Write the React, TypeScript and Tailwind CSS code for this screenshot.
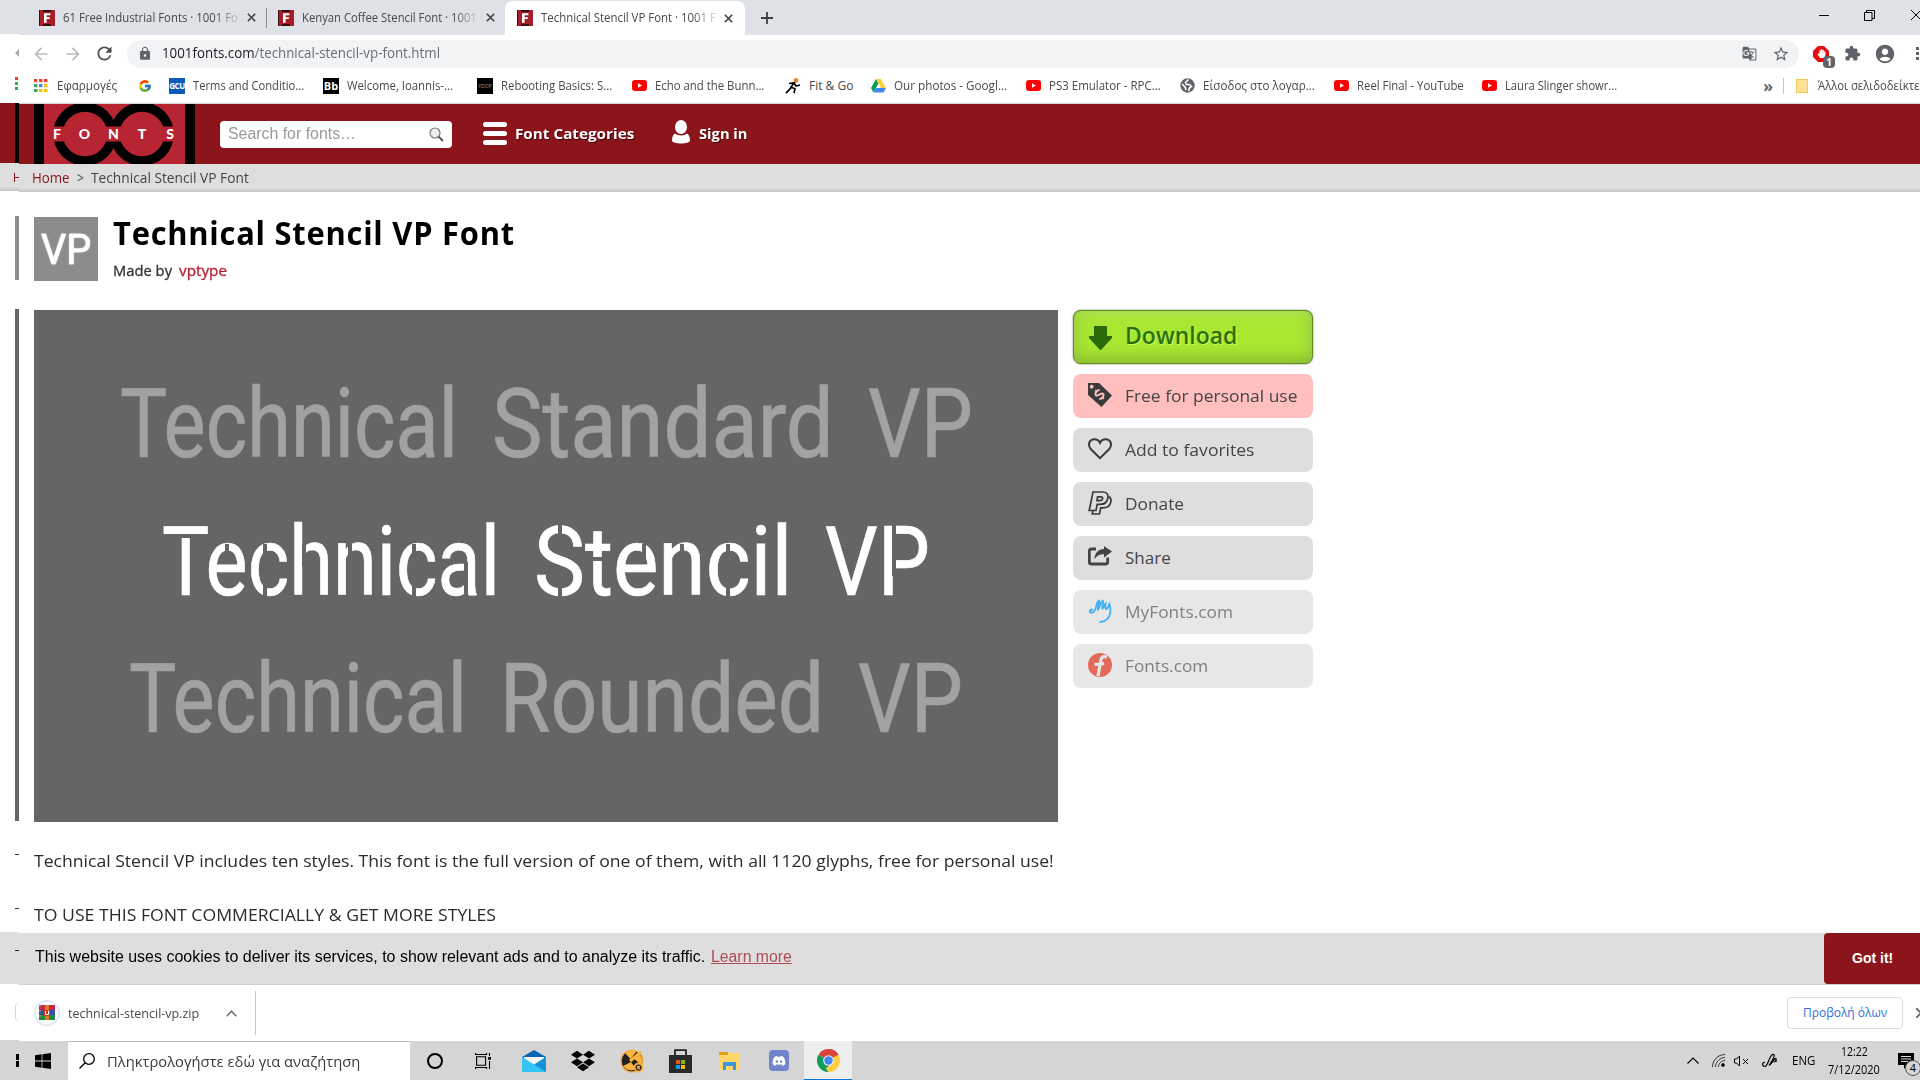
import React, { useLayoutEffect, useRef, useState } from "react";
import type { ReactNode } from "react";
import { FcGoogle } from "react-icons/fc";
import { FaDiscord, FaDropbox, FaHandPaper } from "react-icons/fa";
import { MdLock, MdStarBorder, MdExtension, MdAccountCircle, MdGTranslate, MdRefresh, MdArrowBack, MdArrowForward } from "react-icons/md";

/** Single line of text stretched horizontally to a given width. */
function Fit({ w, className = "", children }: { w: number; className?: string; children: ReactNode }) {
  const ref = useRef<HTMLSpanElement>(null);
  const [s, setS] = useState(1);
  useLayoutEffect(() => {
    if (ref.current) setS(w / ref.current.offsetWidth);
  }, [w]);
  return (
    <span className="block shrink-0" style={{ width: w }}>
      <span ref={ref} className={"inline-block origin-left whitespace-nowrap align-top " + className} style={{ transform: `scaleX(${s})` }}>
        {children}
      </span>
    </span>
  );
}

function FontsFavicon() {
  return (
    <svg className="h-4 w-4 shrink-0" viewBox="0 0 16 16">
      <rect width="16" height="16" fill="#a61f2b" />
      <path d="M4 0h8v2H4zM4 14h8v2H4zM0 0h1v16H0z" fill="#3a0d10" />
      <path d="M5 3.2h6.4v2H7.6v2h3.2v1.9H7.6v3.7H5z" fill="#fff" />
    </svg>
  );
}

function Cross({ className = "" }: { className?: string }) {
  return (
    <svg className={"h-[9px] w-[9px] shrink-0 " + className} viewBox="0 0 9 9">
      <path d="M.8.8l7.4 7.4M8.2.8L.8 8.2" stroke="#3c4043" strokeWidth="1.6" />
    </svg>
  );
}

function TabTitle({ children }: { children: string }) {
  return (
    <div className="ml-2 w-[176px] [mask-image:linear-gradient(to_right,black_86%,transparent_102%)]">
      <Fit w={175}>{children}</Fit>
    </div>
  );
}

function Tabs() {
  return (
    <div className="flex h-[35px] items-center bg-[#dee1e6] text-[12px] text-[#45484c]">
      <div className="flex w-[247px] items-center pl-5">
        <FontsFavicon />
        <TabTitle>61 Free Industrial Fonts · 1001 Fo</TabTitle>
        <Cross className="ml-2" />
      </div>
      <div className="h-5 w-px bg-[#8a8d91]" />
      <div className="flex w-[238px] items-center pl-[11px]">
        <FontsFavicon />
        <TabTitle>Kenyan Coffee Stencil Font · 1001</TabTitle>
        <Cross className="ml-2" />
      </div>
      <div className="mt-px flex h-[34px] w-[240px] items-center rounded-t-lg bg-white pl-3">
        <FontsFavicon />
        <TabTitle>Technical Stencil VP Font · 1001 F</TabTitle>
        <Cross className="ml-[7px]" />
      </div>
      <svg className="ml-4 h-3 w-3" viewBox="0 0 12 12"><path d="M6 0v12M0 6h12" stroke="#3c4043" strokeWidth="1.8" /></svg>
      <div className="mb-[5px] ml-auto flex items-center">
        <div className="mr-[-1px] h-px w-[10px] bg-black" />
        <svg className="ml-9 h-[11px] w-[11px]" viewBox="0 0 11 11"><path d="M.5 2.5h7.5v8H.5zM2.5 2.5v-2h8v8H8" fill="none" stroke="#000" /></svg>
        <svg className="ml-9 h-[10px] w-[9px]" viewBox="0 0 9 10"><path d="M0 0l10 10M10 0L0 10" stroke="#000" /></svg>
      </div>
    </div>
  );
}

function Toolbar() {
  return (
    <div className="flex h-9 items-center pt-[2px] text-[#5f6368]">
      <MdArrowBack className="ml-3 h-5 w-5 text-[#babcbe]" />
      <MdArrowForward className="ml-3 h-5 w-5 text-[#babcbe]" />
      <MdRefresh className="ml-[11px] h-[21px] w-[21px] text-[#4a4d51]" />
      <div className="ml-3 flex h-7 w-[1672px] items-center rounded-full bg-[#f1f3f4]">
        <MdLock className="ml-[10px] h-[15px] w-4" />
        <div className="ml-[9px]"><Fit w={278} className="text-[14px]"><span className="text-[#202124]">1001fonts.com</span><span className="text-[#6a6e73]">/technical-stencil-vp-font.html</span></Fit></div>
        <MdGTranslate className="ml-auto h-[15px] w-[15px]" />
        <MdStarBorder className="ml-[15px] mr-[9px] h-[18px] w-[18px]" />
      </div>
      <div className="relative ml-[14px] h-4 w-4">
        <svg className="h-4 w-4" viewBox="0 0 16 16"><path d="M5 0h6l5 5v6l-5 5H5l-5-5V5z" fill="#e40d12" /></svg>
        <FaHandPaper className="absolute left-1 top-[3px] h-[9px] w-[9px] text-white" />
        <span className="absolute left-[10px] top-[10px] h-3 w-3 rounded-sm bg-[#606367] text-center text-[10px] font-bold leading-3 text-white">1</span>
      </div>
      <MdExtension className="ml-[15px] h-[17px] w-[17px]" />
      <MdAccountCircle className="ml-[13px] h-[22px] w-[22px]" />
      <div className="ml-5 flex flex-col gap-[2px]">
        <i className="block h-[3px] w-[3px] bg-[#5f6368]" /><i className="block h-[3px] w-[3px] bg-[#5f6368]" /><i className="block h-[3px] w-[3px] bg-[#5f6368]" />
      </div>
    </div>
  );
}

function YouTube() {
  return <svg className="h-[11px] w-[15px]" viewBox="0 0 15 11"><rect width="15" height="11" rx="3" fill="#f00" /><path d="M6 3.2v4.6l4-2.3z" fill="#fff" /></svg>;
}

function Apps() {
  return (
    <svg className="h-[13px] w-[14px]" viewBox="0 0 14 13">
      {["#ea4335", "#ea4335", "#ea4335", "#34a853", "#4285f4", "#fbbc05", "#34a853", "#fbbc05", "#fbbc05"].map((c, i) => (
        <rect key={i} x={(i % 3) * 5} y={Math.floor(i / 3) * 5} width="3.4" height="3.2" fill={c} />
      ))}
    </svg>
  );
}

const marks: { icon: ReactNode; w: number; label: string; next: number }[] = [
  { icon: <Apps />, w: 60, label: "Εφαρμογές", next: 20 },
  { icon: <FcGoogle className="h-[14px] w-[14px]" />, w: 0, label: "", next: 16 },
  { icon: <span className="flex h-4 w-4 items-center justify-center bg-[#0b5cb8] text-[8px] font-bold tracking-tighter text-white">GCU</span>, w: 111, label: "Terms and Conditio...", next: 19 },
  { icon: <span className="flex h-4 w-4 items-center justify-center bg-black text-[11px] font-bold text-white">Bb</span>, w: 106, label: "Welcome, Ioannis-...", next: 24 },
  { icon: <span className="flex h-4 w-4 items-center justify-center bg-black text-[5px] text-neutral-400">YDOP</span>, w: 111, label: "Rebooting Basics: S...", next: 19 },
  { icon: <YouTube />, w: 109, label: "Echo and the Bunn...", next: 21 },
  {
    icon: <svg className="h-4 w-4" viewBox="0 0 16 16"><circle cx="11" cy="2.4" r="2.3" fill="#f58220" /><path d="M4 5.5l5-.6-3 4.3 4 1.6-1 4.5M6.3 9.5L1 15.2M9 5l2 3 4-1" stroke="#000" strokeWidth="1.7" fill="none" /></svg>,
    w: 44, label: "Fit & Go", next: 17,
  },
  {
    icon: <svg className="h-[14px] w-[15px]" viewBox="0 0 15 14"><path d="M5 0L0 9l2.5 4.5L7.5 4.500z" fill="#0f9d58" /><path d="M5 0h5l5 9h-5z" fill="#ffcd40" /><path d="M2.5 13.5L5 9h10l-2.5 4.5z" fill="#4285f4" /></svg>,
    w: 113, label: "Our photos - Googl...", next: 18,
  },
  { icon: <YouTube />, w: 112, label: "PS3 Emulator - RPC...", next: 18 },
  {
    icon: <svg className="h-[15px] w-[15px]" viewBox="0 0 15 15"><circle cx="7.5" cy="7.5" r="7.2" fill="#5f6368" /><path d="M8.5 1.5L5.5 4.5l1 2h3l2 2-2 1.500-1 3M2 6l3 3 1 3" stroke="#fff" strokeWidth="1.6" fill="none" /></svg>,
    w: 112, label: "Είσοδος στο λογαρ...", next: 18,
  },
  { icon: <YouTube />, w: 107, label: "Reel Final - YouTube", next: 17 },
  { icon: <YouTube />, w: 112, label: "Laura Slinger showr...", next: 0 },
];

function Bookmarks() {
  return (
    <div className="flex h-8 items-center border-b border-[#d3d3d3] pb-[3px] pl-[14px] text-[12px] leading-4 text-[#45484c]">
      {marks.map((m, i) => (
        <React.Fragment key={i}>
          <div className="flex w-4 shrink-0 justify-center">{m.icon}</div>
          {m.label && <div className="ml-2"><Fit w={m.w}>{m.label}</Fit></div>}
          <div className="shrink-0" style={{ width: m.next }} />
        </React.Fragment>
      ))}
      <span className="ml-auto text-[16px] font-bold leading-4 text-[#5f6368]">»</span>
      <div className="ml-[10px] h-4 w-px bg-[#c4c6c9]" />
      <div className="ml-3 h-[14px] w-3 border border-[#f0cb58] bg-[#fde293]" />
      <div className="ml-[10px]"><Fit w={102}>Άλλοι σελιδοδείκτε</Fit></div>
    </div>
  );
}

function Header() {
  return (
    <div className="flex h-[60px] items-center bg-[#8c151c] font-bold text-white">
      <svg className="ml-[15px] h-[60px] w-[161px]" viewBox="0 0 161 60">
        <rect width="161" height="60" fill="#000" />
        <rect x="10" width="141" height="60" fill="#b72533" />
        <g fill="none" stroke="#000" strokeWidth="9.500"><circle cx="51" cy="30" r="27" /><circle cx="108" cy="30" r="27" /></g>
        <rect x="10" y="22.500" width="141" height="15" fill="#b72533" />
        <g fill="#fff" fontFamily="Lato" fontWeight="900" fontSize="14" textAnchor="middle">
          <text x="23" y="35">F</text><text x="50.500" y="35">O</text><text x="79.500" y="35">N</text><text x="108" y="35">T</text><text x="136" y="35">S</text>
        </g>
      </svg>
      <div className="ml-[25px] mt-px flex h-[27px] w-[232px] items-center rounded bg-white pl-2 pr-2 font-['Liberation_Sans'] text-[16px] font-normal text-[#999]">
        <Fit w={128}>Search for fonts…</Fit>
        <svg className="ml-auto h-[15px] w-[15px]" viewBox="0 0 15 15"><circle cx="6" cy="6" r="5" fill="#eee" stroke="#777" strokeWidth="1.2" /><path d="M9.500 9.500L14 14" stroke="#555" strokeWidth="1.900" /></svg>
      </div>
      <div className="ml-[31px] flex w-6 flex-col gap-[4px]">
        <i className="h-[5px] rounded-full bg-white" /><i className="h-[5px] rounded-full bg-white" /><i className="h-[5px] rounded-full bg-white" />
      </div>
      <div className="ml-2"><Fit w={119} className="text-[15px] [text-shadow:1px_1px_1px_#400]">Font Categories</Fit></div>
      <svg className="-mt-[3px] ml-[38px] h-6 w-[18px]" viewBox="0 0 18 24"><path d="M3 13.500c3 2.500 9 2.500 12 0 2 1 3 4 3 7 0 4-18 4-18 0 0-3 1-6 3-7z" fill="#fff" /><ellipse cx="9" cy="7" rx="6" ry="7" fill="#fff" /></svg>
      <div className="ml-[9px]"><Fit w={49} className="text-[15px] [text-shadow:1px_1px_1px_#400]">Sign in</Fit></div>
    </div>
  );
}

function PaypalOutline() {
  return (
    <svg viewBox="0 0 24 24" fill="none" stroke="#3a3a3a" strokeWidth="1.700">
      <path d="M5 1h9.500c4 0 6 2 5.400 6-.7 4.500-3.700 6.400-8 6.400H9.200L8 19.500H1.200z" />
      <path d="M9.600 5.800h3.200c1.500 0 2 .8 1.800 1.800-.3 1.500-1.300 2-2.800 2H9z" />
      <path d="M21 5.500c2 1.500 2.400 4 1.500 6.500-1 3.500-4 4.800-7.500 4.800h-2.300L11.500 23H4.300l.6-3" />
    </svg>
  );
}

const inactive = "#e7e7e7";
const actions: { label: string; w: number; bg: string; color: string; icon: ReactNode }[] = [
  {
    label: "Free for personal use", w: 172, bg: "#ffbfbf", color: "#444",
    icon: <svg viewBox="0 0 24 24"><path d="M0 0h11l13 12.500L13.500 24 0 12z" fill="#3a3a3a" /><circle cx="3.700" cy="3.700" r="1.900" fill="#ffbfbf" /><g transform="translate(11.500 11.500) rotate(-45)"><path d="M3.300-3C2-4.600-3-4.600-3-2s6 1.500 6 4-5 2.700-6.300 1M0-6v1.800M0 4.200V6.200" stroke="#ffbfbf" strokeWidth="1.900" fill="none" /></g></svg>,
  },
  {
    label: "Add to favorites", w: 130, bg: "#dedede", color: "#444",
    icon: <svg viewBox="0 0 24 24"><path d="M12 21.200L2.700 12C-1 7 2 2.200 6.200 2.200c3 0 5 1.800 5.800 3.600.8-1.800 2.800-3.600 5.800-3.600C22 2.200 25 7 21.300 12z" fill="none" stroke="#3a3a3a" strokeWidth="2" /></svg>,
  },
  { label: "Donate", w: 59, bg: "#dedede", color: "#444", icon: <PaypalOutline /> },
  {
    label: "Share", w: 46, bg: "#dedede", color: "#444",
    icon: <svg viewBox="0 0 24 24"><path d="M8 4H3.500Q1.300 4 1.300 6.200v10.600Q1.300 19 3.500 19h14Q19.700 19 19.700 17v-4.500" fill="none" stroke="#444" strokeWidth="2.800" /><path d="M16 1l8 5.500-8 6V9.200c-4 0-7 1-9.500 5C6.500 8 10.500 4 16 4z" fill="#444" /></svg>,
  },
  {
    label: "MyFonts.com", w: 108, bg: inactive, color: "#808080",
    icon: <svg viewBox="0 0 24 24"><path d="M3.500 10.500C0 11 0 14 4 13.500 8 13 7.500 3 10.500 1.500c1.500 1-1.500 7-1 9 1.500-2 3-8 5-9 1.500.5-1 6-.5 8 1.500 0 2-4 3.500-5-.5 3-1 5 .5 5.500 2 0 2.500-3 3.500-5 1.500 4 3 17-9.500 18" transform="translate(.8 0) scale(.96 1)" fill="none" stroke="#3db0f7" strokeWidth="1.900" strokeLinecap="round" /></svg>,
  },
  {
    label: "Fonts.com", w: 83, bg: inactive, color: "#808080",
    icon: <svg viewBox="0 0 24 24"><circle cx="12" cy="12" r="12" fill="#e36b5b" /><path d="M19 4c-5-1.500-6 1-6.500 5L10 23M6.500 11.500l9.500-.8" fill="none" stroke={inactive} strokeWidth="3.200" /></svg>,
  },
];

/** Bridges that break up the stencil letters, in panel coordinates. */
const bridges = [
  { x: 128, y: 224.5, w: 52, h: 4 },
  { x: 190.500, y: 234, w: 4, h: 14 },
  { x: 229, y: 234, w: 4, h: 56 },
  { x: 268, y: 234, w: 4, h: 22 },
  { x: 314, y: 234, w: 4, h: 24 },
  { x: 378, y: 234, w: 4, h: 56 },
  { x: 430, y: 252, w: 4, h: 36 },
  { x: 524, y: 212, w: 4, h: 16 },
  { x: 524, y: 272, w: 4, h: 18 },
  { x: 552, y: 247, w: 28, h: 4 },
  { x: 608, y: 234, w: 4, h: 14 },
  { x: 646, y: 234, w: 4, h: 24 },
  { x: 692, y: 234, w: 4, h: 56 },
  { x: 858, y: 212, w: 4, h: 54 },
];

function Specimen() {
  return (
    <div className="relative flex h-[512px] w-[1024px] shrink-0 flex-col bg-[#666465] pt-[66px] font-['Roboto'] text-[97px] leading-[97px] text-[#a2a2a2] [-webkit-text-stroke:0.7px_currentColor]">
      <div className="flex pl-[86px]">
        <Fit w={338}>Technical</Fit><div className="w-[34px]" /><Fit w={342}>Standard</Fit><div className="w-[34px]" /><Fit w={105}>VP</Fit>
      </div>
      <div className="mt-[41px] flex pl-[128px] text-white">
        <Fit w={338}>Technical</Fit><div className="w-[34px]" /><Fit w={258}>Stencil</Fit><div className="w-[33px]" /><Fit w={105}>VP</Fit>
      </div>
      <div className="mt-[40px] flex pl-[95px]">
        <Fit w={338}>Technical</Fit><div className="w-[33px]" /><Fit w={324}>Rounded</Fit><div className="w-[34px]" /><Fit w={105}>VP</Fit>
      </div>
      {bridges.map((b, i) => (
        <i key={i} className="absolute bg-[#666465]" style={{ left: b.x, top: b.y, width: b.w, height: b.h }} />
      ))}
    </div>
  );
}

function Page() {
  return (
    <div className="h-[742px] overflow-hidden text-[#333]">
      <div className="flex pl-[15px] pt-[25px]">
        <div className="flex h-16 w-16 items-center justify-center bg-[#8b8c8c] pt-[2px]">
          <Fit w={50} className="font-['Roboto'] text-[42px] leading-[64px] text-white [-webkit-text-stroke:0.600px_white] [text-shadow:0_0_2px_white]">VP</Fit>
        </div>
        <div className="-mt-px ml-[15px] h-[65px]">
          <Fit w={402} className="text-[33px] font-bold leading-[34px] tracking-wide text-black">Technical Stencil VP Font</Fit>
          <div className="mt-[10px] flex text-[14px] leading-[22px] [-webkit-text-stroke:0.300px_currentColor]">
            <Fit w={59}>Made by</Fit>
            <div className="w-[7px]" />
            <Fit w={48} className="text-[#b71f30]">vptype</Fit>
          </div>
        </div>
      </div>
      <div className="mt-[29px] flex pl-[15px]">
        <Specimen />
        <div className="ml-[15px] flex w-[240px] flex-col gap-[10px]">
          <div className="flex h-[54px] items-center rounded-lg border border-[#5c8f16] bg-[#a8e732] pl-[15px] [box-shadow:inset_0_2px_12px_rgba(255,255,255,.25),inset_0_-4px_14px_rgba(70,110,10,.45),0_0_2px_#777]">
            <svg className="mt-[2px] h-6 w-[23px]" viewBox="0 0 23 24"><path d="M5 0h13v10h5v2L12 24h-1L0 12v-2h5z" fill="#2b6a09" /></svg>
            <div className="-mt-1 ml-[13px]"><Fit w={112} className="text-[23px] font-semibold text-[#2f6f0b] [text-shadow:1px_1px_0_#c8ff60]">Download</Fit></div>
          </div>
          {actions.map((a) => (
            <div key={a.label} className="flex h-11 items-center rounded-lg pl-[15px]" style={{ background: a.bg, color: a.color }}>
              <div className="mb-[1px] h-6 w-6 [&>svg]:h-6 [&>svg]:w-6">{a.icon}</div>
              <div className="ml-[13px]"><Fit w={a.w} className="text-[17px]">{a.label}</Fit></div>
            </div>
          ))}
        </div>
      </div>
      <div className="pl-[15px] text-[17px] leading-[54px] text-[#2b2b2b]">
        <div className="mt-[12px]"><Fit w={1020}>Technical Stencil VP includes ten styles. This font is the full version of one of them, with all 1120 glyphs, free for personal use!</Fit></div>
        <div><Fit w={462}>TO USE THIS FONT COMMERCIALLY &amp; GET MORE STYLES</Fit></div>
      </div>
    </div>
  );
}

function CookieBar() {
  return (
    <div className="flex h-[52px] items-center border-b border-[#d0d0d4] bg-[#dedede] pl-4 font-['Liberation_Sans'] text-[16px] text-black">
      <div className="-mt-[3px] flex">
        <Fit w={670}>This website uses cookies to deliver its services, to show relevant ads and to analyze its traffic.</Fit>
        <div className="w-[6px]" />
        <Fit w={81} className="text-[#ad4c55] underline">Learn more</Fit>
      </div>
      <div className="ml-auto flex h-[51px] w-24 items-center rounded-l bg-[#8c151c] pl-7 text-[14px] font-bold text-white"><Fit w={41}>Got it!</Fit></div>
    </div>
  );
}

function Downloads() {
  return (
    <div className="flex h-[56px] items-center bg-white pl-[15px] text-[12px]">
      <svg className="h-[26px] w-[26px]" viewBox="0 0 26 26">
        <circle cx="13" cy="13" r="12.300" fill="#f8fafe" stroke="#d9e4f8" strokeWidth="1.500" />
        <path d="M5 5h16v5H5z" fill="#c2284e" /><path d="M5 10h16v5H5z" fill="#344fa8" /><path d="M5 15h16v5H5z" fill="#1c8a3b" />
        <path d="M11 5h4v15h-4z" fill="#e07a1c" /><path d="M10 10h6v6h-6z" fill="#d93416" /><path d="M11.500 11v3.500h3V11" stroke="#fff" fill="none" />
        <path d="M6 5v15" stroke="#e8c04a" strokeDasharray="2 3" />
      </svg>
      <div className="ml-2 mt-px"><Fit w={131} className="text-[#45484c]">technical-stencil-vp.zip</Fit></div>
      <svg className="ml-[27px] h-[7px] w-[11px]" viewBox="0 0 11 7"><path d="M.7 6.200l4.800-5 4.800 5" fill="none" stroke="#707376" strokeWidth="1.600" /></svg>
      <div className="ml-[18px] h-11 w-px bg-[#c4c6c8]" />
      <div className="ml-auto flex h-8 w-[116px] items-center justify-center rounded border border-[#dadce0] text-[#2f6fe0]"><Fit w={84}>Προβολή όλων</Fit></div>
      <svg className="ml-[13px] h-[10px] w-1" viewBox="0 0 4 10"><path d="M0 0l5 5-5 5" fill="none" stroke="#5f6368" strokeWidth="1.800" /></svg>
    </div>
  );
}

function Taskbar() {
  return (
    <div className="flex h-[39px] items-center bg-[#d5d5d5] text-[12px] text-black">
      <svg className="ml-4 h-4 w-4" viewBox="0 0 16 16"><path d="M0 2.200L6.600 1.300v6.300H0zM7.400 1.200L16 0v7.600H7.400zM0 8.400h6.600v6.300L0 13.800zM7.400 8.400H16V16l-8.600-1.200z" /></svg>
      <div className="ml-[17px] flex h-[39px] w-[342px] items-center border-t border-[#bdbdbd] bg-white pl-[11px]">
        <svg className="h-4 w-4" viewBox="0 0 16 16"><circle cx="10" cy="6" r="5.300" fill="none" stroke="#000" strokeWidth="1.300" /><path d="M6.200 9.800L.5 15.500" stroke="#000" strokeWidth="1.300" /></svg>
        <div className="ml-3"><Fit w={253} className="text-[15px] text-[#3c3c3c]">Πληκτρολογήστε εδώ για αναζήτηση</Fit></div>
      </div>
      <div className="ml-[17px] h-4 w-4 rounded-full border-2 border-black" />
      <svg className="ml-8 h-4 w-4" viewBox="0 0 16 16" fill="none" stroke="#000" strokeWidth="1.100"><path d="M1.600 3.700h9v8.600h-9zM.6 0v1.500h11V0M.6 16v-1.500h11V16M14.500 0v3M14.500 8v8" /><path d="M13.200 4h2.800v2.800h-2.800z" fill="#000" stroke="none" /></svg>
      <svg className="ml-[31px] h-[22px] w-6" viewBox="0 0 24 22"><path d="M0 7l12-7 12 7v4H0z" fill="#0a64b4" /><path d="M2 7h20v8H2z" fill="#f4f4f4" /><path d="M0 7l12 8.500L24 7v15H0z" fill="#29b6f0" /><path d="M0 22L24 7v15z" fill="#1590dc" /><path d="M0 7l24 15H0z" fill="#35c5f4" /></svg>
      <FaDropbox className="ml-[25px] h-6 w-6" />
      <svg className="ml-[25px] h-6 w-6" viewBox="0 0 24 24"><circle cx="12" cy="12" r="11.500" fill="#f2a93b" /><circle cx="12" cy="12" r="10.300" fill="#222" /><path d="M10.500 10L5 4a10 10 0 0112-2zM13 9l7-3a10 10 0 011.500 10zM11 13l5 7a10 10 0 01-13-3z" fill="#f7b53f" /><path d="M10 12L21 3" stroke="#f7b53f" strokeWidth="3" /><circle cx="18.500" cy="18.500" r="4" fill="#222" stroke="#f7b53f" strokeWidth="1.800" /><path d="M17 17l3 3M20 17l-3 3" stroke="#f7b53f" strokeWidth="1.200" /></svg>
      <svg className="ml-[25px] h-6 w-[23px]" viewBox="0 0 23 24"><path d="M6 7V1.200h11V7" fill="none" stroke="#222" strokeWidth="1.800" /><path d="M0 6h23v18H0z" fill="#2a2a2a" /><path d="M7 11h4v4H7z" fill="#f25022" /><path d="M12 11h4v4h-4z" fill="#7fba00" /><path d="M7 16h4v4H7z" fill="#00a4ef" /><path d="M12 16h4v4h-4z" fill="#ffb900" /></svg>
      <svg className="ml-[27px] h-[18px] w-[21px]" viewBox="0 0 21 18"><path d="M0 0h9v4H0z" fill="#e09c10" /><path d="M0 3h8l2-2h11v17H0z" fill="#ffd667" /><path d="M4 18v-8h13v8h-3v-4H7v4z" fill="#3a96dd" /></svg>
      <div className="ml-[29px] flex h-[21px] w-5 items-center justify-center rounded-sm bg-[#7184cb]"><FaDiscord className="h-[14px] w-[14px] text-white" /></div>
      <div className="ml-[15px] flex h-[39px] w-12 items-center justify-center border-b border-[#0078d7] bg-[#eee]">
        <svg className="h-[23px] w-[23px]" viewBox="0 0 24 24"><path d="M12 12L1.600 6A12 12 0 0122.400 6z" fill="#db4437" /><path d="M12 12L22.400 6A12 12 0 0112 24z" fill="#ffcd40" /><path d="M12 12v12A12 12 0 011.600 6z" fill="#0f9d58" /><path d="M12 6h10.400A12 12 0 0012 0z" fill="#db4437" /><path d="M17 15l-5 9-3-4z" fill="#ffcd40" /><circle cx="12" cy="12" r="5.500" fill="#f1f1f1" /><circle cx="12" cy="12" r="4.400" fill="#4285f4" /></svg>
      </div>
      <svg className="ml-auto h-[7px] w-3" viewBox="0 0 12 7"><path d="M.5 6.500L6 1l5.500 5.500" fill="none" stroke="#000" strokeWidth="1.200" /></svg>
      <svg className="ml-[13px] h-[13px] w-[13px]" viewBox="0 0 13 13" fill="none" stroke="#333"><path d="M.5 13C.5 6 6 .5 13 .5M3.500 13C3.500 8 8 3.500 13 3.500M6.500 13C6.500 9.500 9.500 6.500 13 6.500" /><circle cx="11" cy="11" r="1.500" fill="#000" /></svg>
      <svg className="ml-[9px] h-3 w-[15px]" viewBox="0 0 15 12" fill="none" stroke="#000"><path d="M.5 4h2l3-3v10l-3-3h-2zM9 4l5 5M14 4L9 9" /></svg>
      <svg className="ml-[13px] h-4 w-4" viewBox="0 0 16 16" fill="none" stroke="#000" strokeWidth="1.200"><path d="M3 9.500c-3.500-.5-3 4 0 4 3-.5 4-10 7.500-12 3-1 2 3-3.500 11M7 12.500c3-2 4-5 6-7 2-.5 1 2 0 3l2-.5" /></svg>
      <div className="ml-[14px]"><Fit w={23}>ENG</Fit></div>
      <div className="ml-[13px] flex w-[52px] flex-col items-center leading-[18px]"><Fit w={27}>12:22</Fit><Fit w={52}>7/12/2020</Fit></div>
      <div className="relative ml-[18px] h-[15px] w-[22px]">
        <svg className="h-4 w-4" viewBox="0 0 16 16"><path d="M0 0h16v12H9l-3 4v-4H0z" /><path d="M3 3.500h10M3 6h10M3 8.500h7" stroke="#ddd" /></svg>
        <span className="absolute left-[7px] top-[7px] h-4 w-4 rounded-full border border-[#555] bg-[#d5d5d5] text-center text-[11px] leading-[14px]">4</span>
      </div>
    </div>
  );
}

/** Narrow strip left of the window that shows the cut-off edge of the same screen. */
function EdgeStrip() {
  return (
    <div className="flex w-[19px] shrink-0 flex-col items-end bg-white">
      <div className="h-[34px] w-full bg-[#dee1e6]" />
      <div className="mt-[15px] h-0 w-0 border-y-[4px] border-r-[4px] border-y-transparent border-r-[#aaa]" />
      <div className="mr-px mt-[20px] flex flex-col gap-[2px]"><i className="h-[3px] w-[3px] bg-[#ea4335]" /><i className="h-[3px] w-[3px] bg-[#34a853]" /><i className="h-[3px] w-[3px] bg-[#34a853]" /></div>
      <div className="mt-[13px] flex h-[60px] w-full justify-end bg-[#8c151c]"><div className="h-full w-1 bg-black" /></div>
      <div className="flex h-7 w-full items-center justify-end overflow-hidden bg-gradient-to-b from-[#dedede] from-85% to-[#c4c4c4]">
        <div className="mr-0 h-[9px] w-[5px] border-l border-[#8c151c] pt-[4px]"><div className="h-px w-full bg-[#8c151c]" /></div>
      </div>
      <div className="mt-[25px] h-16 w-1 bg-[#8b8c8c]" />
      <div className="mt-[29px] h-[512px] w-1 bg-[#666465]" />
      <div className="mt-[33px] h-px w-1 bg-[#333]" />
      <div className="mt-[53px] h-px w-1 bg-[#333]" />
      <div className="mt-[23px] flex h-[52px] w-full justify-end bg-[#dedede] pt-[18px]"><div className="h-px w-1 bg-[#222]" /></div>
      <div className="flex h-[56px] w-full items-center justify-end"><div className="h-[18px] w-1 rounded-l-full border-l border-[#c5d8f8]" /></div>
      <div className="flex h-10 w-full items-center justify-end bg-[#d5d5d5]"><div className="flex flex-col gap-px"><i className="h-[6px] w-[3px] bg-black" /><i className="h-[6px] w-[3px] bg-black" /></div></div>
    </div>
  );
}

export default function App() {
  return (
    <div className="flex h-[1080px] w-[1920px] overflow-hidden bg-white font-['Open_Sans',sans-serif]">
      <EdgeStrip />
      <div className="flex w-[1901px] flex-col">
        <Tabs />
        <Toolbar />
        <div className="h-px" />
        <Bookmarks />
        <Header />
        <div className="flex h-7 items-center bg-gradient-to-b from-[#dedede] from-85% to-[#c4c4c4] pl-[13px] text-[14px] text-[#444]">
          <Fit w={38} className="text-[#8c151c]">Home</Fit>
          <div className="w-[7px]" />
          <Fit w={7}>&gt;</Fit>
          <div className="w-[7px]" />
          <Fit w={158}>Technical Stencil VP Font</Fit>
        </div>
        <Page />
        <CookieBar />
        <Downloads />
        <Taskbar />
      </div>
    </div>
  );
}
